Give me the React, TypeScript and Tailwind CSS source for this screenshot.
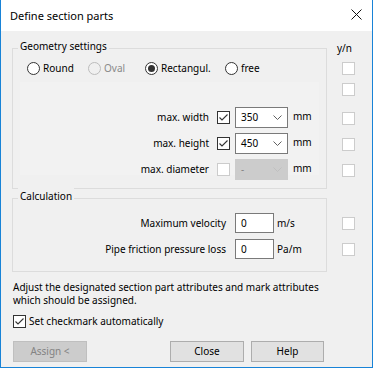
import clsx from "clsx";

const Check = ({ checked = false, disabled = false }: { checked?: boolean; disabled?: boolean }) => (
  <span
    className={clsx(
      "w-[13px] h-[13px] shrink-0 border bg-white flex items-center justify-center",
      checked && !disabled ? "border-[#333333]" : "border-[#cccccc]"
    )}
  >
    {checked ? (
      <svg width="11" height="11" viewBox="0 0 11 11">
        <path d="M1.5 5.5 L4 8 L9.5 2.5" stroke="#333333" strokeWidth="1.1" fill="none" />
      </svg>
    ) : null}
  </span>
);

const Radio = ({ checked = false, disabled = false }: { checked?: boolean; disabled?: boolean }) => (
  <span
    className={clsx(
      "w-[13px] h-[13px] shrink-0 rounded-full border flex items-center justify-center",
      disabled ? "border-[#bcbcbc] bg-[#f0f0f0]" : "border-[#333333] bg-white"
    )}
  >
    {checked ? <span className="w-[7px] h-[7px] rounded-full bg-[#333333]" /> : null}
  </span>
);

const Chevron = ({ color }: { color: string }) => (
  <svg width="9" height="5" viewBox="0 0 9 5">
    <path d="M0.5 0.5 L4.5 4.5 L8.5 0.5" stroke={color} fill="none" />
  </svg>
);

const Combo = ({ value, disabled = false }: { value: string; disabled?: boolean }) => (
  <div
    className={clsx(
      "ml-[5px] w-[53px] h-[21px] border flex items-center justify-between pl-[5px] pr-[5px]",
      disabled ? "bg-[#cccccc] border-[#cccccc] text-[#838383]" : "bg-white border-[#7a7a7a] text-black"
    )}
  >
    <span>{value}</span>
    <Chevron color={disabled ? "#bfbfbf" : "#606060"} />
  </div>
);

const SizeRow = ({ label, value, checked, disabled }: { label: string; value: string; checked: boolean; disabled?: boolean }) => (
  <div className="flex items-center">
    <span className="w-[196px] text-right">{label}</span>
    <span className="ml-[8px]">
      <Check checked={checked} disabled={disabled} />
    </span>
    <Combo value={value} disabled={disabled} />
    <span className="ml-[5px] -mt-[3px]">mm</span>
  </div>
);

const CalcRow = ({ label, unit }: { label: string; unit: string }) => (
  <div className="flex items-center">
    <span className="w-[213px] text-right">{label}</span>
    <div className="ml-[9px] w-[39px] h-[20px] border border-[#7a7a7a] bg-white pl-[5px] flex items-center">0</div>
    <span className="ml-[3px]">{unit}</span>
  </div>
);

const GroupLabel = ({ text }: { text: string }) => (
  <span className="absolute -top-[11px] left-[5px] px-[2px] bg-[#f0f0f0] leading-[16px]">{text}</span>
);

const App = () => {
  return (
    <div
      className="w-[373px] h-[368px] flex flex-col bg-[#f0f0f0] border-x border-b border-[#1883d7] text-[10px] leading-[13px] text-black"
      style={{ fontFamily: '"Noto Sans", "Open Sans", sans-serif' }}
    >
      <div className="h-[31px] shrink-0 bg-white flex items-center justify-between pl-[9px] pr-[10px]">
        <span className="text-[11px] -mt-[1px]">Define section parts</span>
        <svg width="11" height="11" viewBox="0 0 11 11" className="-mt-[2px]">
          <path d="M0.5 0.5 L10.5 10.5 M10.5 0.5 L0.5 10.5" stroke="#111111" strokeWidth="1" fill="none" />
        </svg>
      </div>

      <div className="flex-1 flex flex-col px-[11px]">
        <div className="flex">
          <div className="w-[315px] flex flex-col">
            <div className="relative mt-[17px] h-[141px] border border-[#dcdcdc]">
              <GroupLabel text="Geometry settings" />
              <div className="flex items-center mt-[13px] pl-[14px]">
                <div className="w-[61px] flex items-center gap-[3px]">
                  <Radio />
                  <span>Round</span>
                </div>
                <div className="w-[57px] flex items-center gap-[3px] text-[#8a8a8a]">
                  <Radio disabled />
                  <span>Oval</span>
                </div>
                <div className="w-[80px] flex items-center gap-[3px]">
                  <Radio checked />
                  <span>Rectangul.</span>
                </div>
                <div className="flex items-center gap-[3px]">
                  <Radio />
                  <span>free</span>
                </div>
              </div>
              <div className="mt-[7px] mx-[7px] h-[93px] bg-[#f2f2f2] pt-[25px] flex flex-col gap-[5px]">
                <div className="-ml-[7px] flex flex-col gap-[5px]">
                  <SizeRow label="max. width" value="350" checked />
                  <SizeRow label="max. height" value="450" checked />
                  <SizeRow label="max. diameter" value="-" checked={false} disabled />
                </div>
              </div>
            </div>

            <div className="relative mt-[9px] h-[74px] border border-[#dcdcdc] pt-[14px] flex flex-col gap-[6px]">
              <GroupLabel text="Calculation" />
              <CalcRow label="Maximum velocity" unit="m/s" />
              <CalcRow label="Pipe friction pressure loss" unit="Pa/m" />
            </div>
          </div>

          <div className="flex-1 flex flex-col">
            <span className="mt-[11px] ml-[10px]">y/n</span>
            <span className="mt-[7px] ml-[15px]"><Check /></span>
            <span className="mt-[8px] ml-[15px]"><Check /></span>
            <span className="mt-[16px] ml-[15px]"><Check /></span>
            <span className="mt-[13px] ml-[15px]"><Check /></span>
            <span className="mt-[13px] ml-[15px]"><Check /></span>
            <span className="mt-[40px] ml-[15px]"><Check /></span>
            <span className="mt-[13px] ml-[15px]"><Check /></span>
          </div>
        </div>

        <p className="mt-[9px] ml-[1px]">
          Adjust the designated section part attributes and mark attributes
          <br />
          which should be assigned.
        </p>

        <div className="mt-[8px] ml-[1px] flex items-center gap-[3px]">
          <Check checked />
          <span>Set checkmark automatically</span>
        </div>

        <div className="mt-[13px] ml-[1px] flex">
          <button className="w-[74px] h-[21px] border border-[#bfbfbf] bg-[#cccccc] text-[#838383]">Assign &lt;</button>
          <button className="ml-[83px] w-[74px] h-[21px] border border-[#adadad] bg-[#e1e1e1]">Close</button>
          <button className="ml-[7px] w-[73px] h-[21px] border border-[#adadad] bg-[#e1e1e1]">Help</button>
        </div>
      </div>
    </div>
  );
};

export default App;
